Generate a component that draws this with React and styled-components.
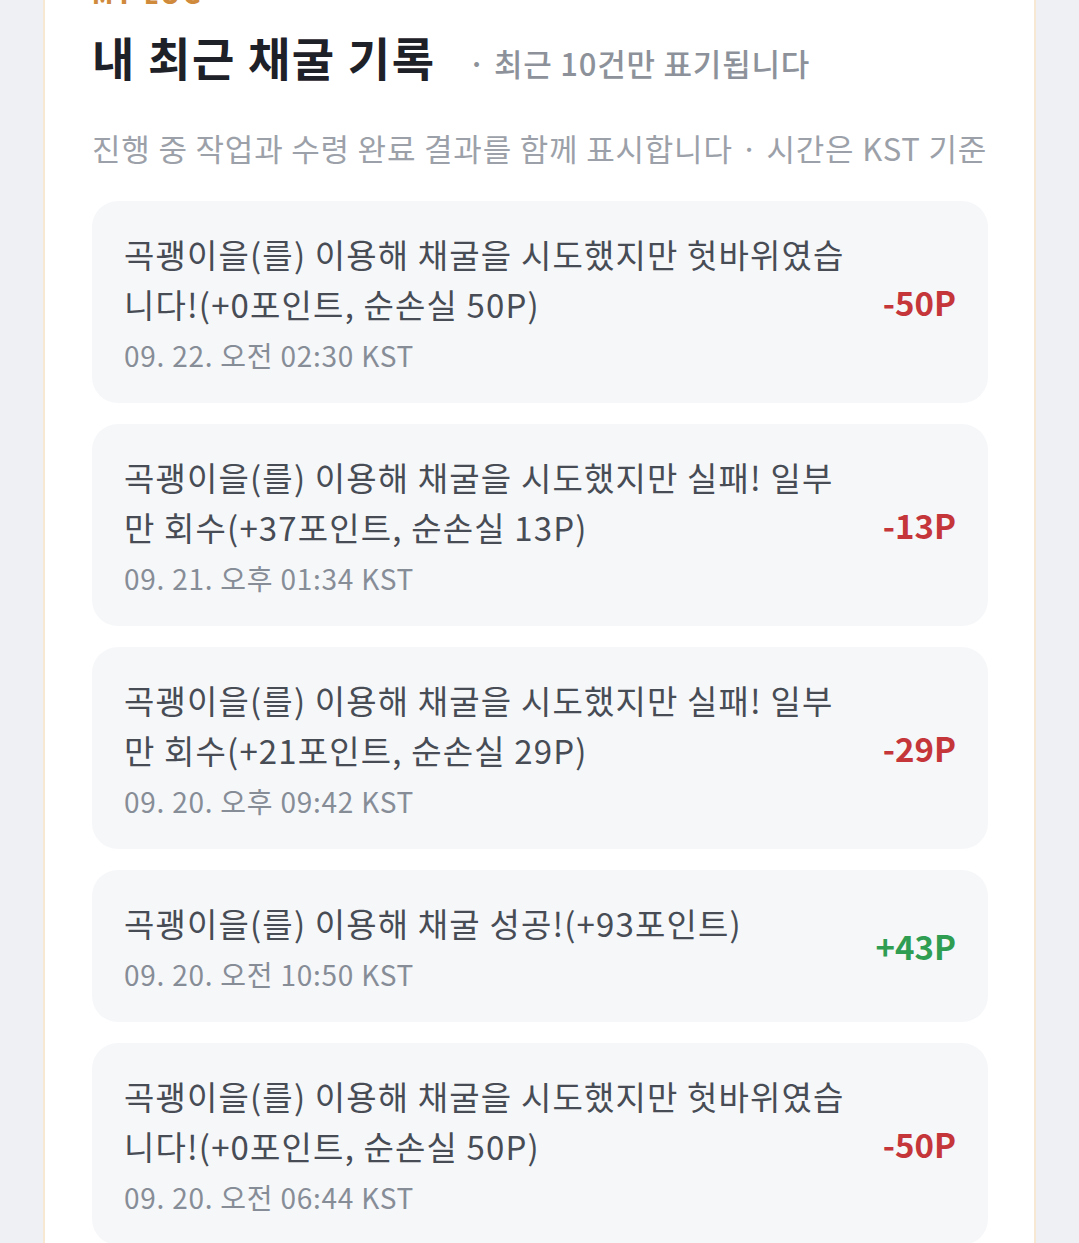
import styled, { createGlobalStyle } from "styled-components";

const GlobalStyle = createGlobalStyle`
  html, body {
    margin: 0;
    padding: 0;
    background: #eff0f4;
    font-family: "Noto Sans CJK KR", "Noto Sans", sans-serif;
    overflow: hidden;
  }
`;

const logs = [
  {
    text: "곡괭이을(를) 이용해 채굴을 시도했지만 헛바위였습니다!(+0포인트, 순손실 50P)",
    time: "09. 22. 오전 02:30 KST",
    amount: -50,
  },
  {
    text: "곡괭이을(를) 이용해 채굴을 시도했지만 실패! 일부만 회수(+37포인트, 순손실 13P)",
    time: "09. 21. 오후 01:34 KST",
    amount: -13,
  },
  {
    text: "곡괭이을(를) 이용해 채굴을 시도했지만 실패! 일부만 회수(+21포인트, 순손실 29P)",
    time: "09. 20. 오후 09:42 KST",
    amount: -29,
  },
  {
    text: "곡괭이을(를) 이용해 채굴 성공!(+93포인트)",
    time: "09. 20. 오전 10:50 KST",
    amount: 43,
  },
  {
    text: "곡괭이을(를) 이용해 채굴을 시도했지만 헛바위였습니다!(+0포인트, 순손실 50P)",
    time: "09. 20. 오전 06:44 KST",
    amount: -50,
  },
];

const App = () => {
  return (
    <Page>
      <GlobalStyle />
      <Card>
        <Label>MY LOG</Label>
        <TitleRow>
          <Title>내 최근 채굴 기록</Title>
          <SubTitle>· 최근 10건만 표기됩니다</SubTitle>
        </TitleRow>
        <Description>
          진행 중 작업과 수령 완료 결과를 함께 표시합니다 · 시간은 KST 기준
        </Description>
        <List>
          {logs.map((log, i) => (
            <Item key={i}>
              <ItemBody>
                <ItemText>{log.text}</ItemText>
                <ItemTime>{log.time}</ItemTime>
              </ItemBody>
              <Amount $positive={log.amount > 0}>
                {log.amount > 0 ? `+${log.amount}P` : `${log.amount}P`}
              </Amount>
            </Item>
          ))}
        </List>
      </Card>
    </Page>
  );
};

const Page = styled.div`
  padding: 0 43px;
  min-height: 1243px;
`;

const Card = styled.section`
  margin-top: -61px;
  background: #ffffff;
  border: 2px solid #f6e8d2;
  border-top: none;
  border-bottom: none;
  padding: 40px 46px 60px 47px;
`;

const Label = styled.div`
  font-size: 24px;
  line-height: 30px;
  font-weight: 800;
  letter-spacing: 0.15em;
  color: #d08a3c;
  margin-bottom: 19px;
`;

const TitleRow = styled.div`
  display: flex;
  align-items: baseline;
  gap: 32px;
`;

const Title = styled.h2`
  margin: 0;
  font-size: 46px;
  line-height: 57px;
  font-weight: 700;
  letter-spacing: 0.035em;
  color: #1e2127;
`;

const SubTitle = styled.span`
  font-size: 31px;
  font-weight: 500;
  letter-spacing: 0.025em;
  color: #8d929a;
`;

const Description = styled.p`
  margin: 40px 0 0;
  font-size: 31px;
  line-height: 45px;
  letter-spacing: 0.026em;
  color: #9ca1a9;
`;

const List = styled.div`
  margin-top: 31px;
  display: flex;
  flex-direction: column;
  gap: 21px;
`;

const Item = styled.div`
  display: flex;
  align-items: center;
  gap: 30px;
  background: #f6f7f9;
  border-radius: 26px;
  padding: 28px 32px 28px 32px;
`;

const ItemBody = styled.div`
  flex: 1;
  min-width: 0;
`;

const ItemText = styled.div`
  font-size: 33px;
  line-height: 50px;
  letter-spacing: 0.035em;
  color: #474c55;
`;

const ItemTime = styled.div`
  margin-top: 6px;
  font-size: 28px;
  line-height: 40px;
  letter-spacing: 0.027em;
  color: #878d97;
`;

const Amount = styled.div`
  flex-shrink: 0;
  font-size: 33px;
  font-weight: 700;
  color: ${({ $positive }) => ($positive ? "#2f9d52" : "#c5363a")};
`;

export default App;
